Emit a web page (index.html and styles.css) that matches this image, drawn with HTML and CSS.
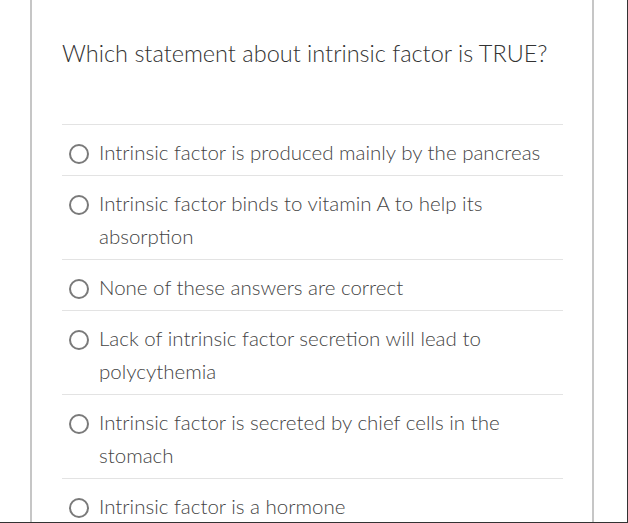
FILE: index.html
```html
<!DOCTYPE html>
<html lang="en">
<head>
<meta charset="utf-8">
<title>Quiz question</title>
<link rel="stylesheet" href="styles.css">
</head>
<body>
<div class="frame">
  <div class="card">
    <h2 class="question">Which statement about intrinsic factor is TRUE?</h2>
    <ul class="answers">
      <li class="answer"><span class="radio"></span><span class="answer-text">Intrinsic factor is produced mainly by the pancreas</span></li>
      <li class="answer"><span class="radio"></span><span class="answer-text">Intrinsic factor binds to vitamin A to help its absorption</span></li>
      <li class="answer"><span class="radio"></span><span class="answer-text">None of these answers are correct</span></li>
      <li class="answer"><span class="radio"></span><span class="answer-text">Lack of intrinsic factor secretion will lead to polycythemia</span></li>
      <li class="answer"><span class="radio"></span><span class="answer-text">Intrinsic factor is secreted by chief cells in the stomach</span></li>
      <li class="answer"><span class="radio"></span><span class="answer-text">Intrinsic factor is a hormone</span></li>
    </ul>
  </div>
</div>
</body>
</html>
```
FILE: styles.css
```css
html, body {
  margin: 0;
  padding: 0;
  background: #ffffff;
}
body {
  font-family: Lato, "Open Sans", "Liberation Sans", sans-serif;
}
.frame {
  box-sizing: border-box;
  width: 628px;
  height: 523px;
  border-right: 1px solid #333333;
  border-bottom: 1px solid #333333;
  overflow: hidden;
  background: #ffffff;
}
.card {
  box-sizing: border-box;
  margin-left: 30px;
  width: 564px;
  height: 100%;
  border-left: 2px solid #c6c6c6;
  border-right: 2px solid #c6c6c6;
  padding: 39px 29px 0 30px;
}
.question {
  margin: 0 0 57px 0;
  font-size: 23.5px;
  line-height: 28px;
  font-weight: 300;
  color: #333333;
}
.answers {
  list-style: none;
  margin: 0;
  padding: 0;
}
.answer {
  display: flex;
  align-items: flex-start;
  border-top: 1px solid #e3e3e3;
  padding: 11px 0 6px 0;
}
.radio {
  flex: none;
  box-sizing: border-box;
  width: 20px;
  height: 20px;
  margin: 8px 10px 0 7px;
  border: 2px solid #7a7a7a;
  border-radius: 50%;
}
.answer-text {
  flex: 1;
  font-size: 20.5px;
  line-height: 33px;
  font-weight: 300;
  color: #444444;
}
```
